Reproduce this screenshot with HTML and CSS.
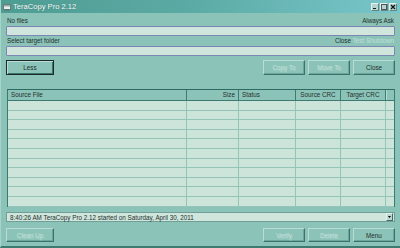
FILE: index.html
```html
<!DOCTYPE html>
<html>
<head>
<meta charset="utf-8">
<link rel="stylesheet" href="styles.css">
</head>
<body>
<div class="window">
  <div class="titlebar">
    <svg class="appicon" width="8" height="8" viewBox="0 0 8 8">
      <rect x="0.5" y="1.5" width="7" height="5" fill="#e8f0ee" stroke="#6a7f7c" stroke-width="1"/>
      <rect x="1" y="2" width="6" height="1.5" fill="#9aa9a7"/>
      <rect x="1.5" y="6.5" width="5" height="1" fill="#5c6d6a"/>
    </svg>
    <span class="title">TeraCopy Pro 2.12</span>
    <div class="winbtns">
      <span class="wbtn"><svg width="6" height="6" viewBox="0 0 6 6"><rect x="1" y="4" width="3" height="1" fill="#1a1a1a"/></svg></span>
      <span class="wbtn"><svg width="6" height="6" viewBox="0 0 6 6"><rect x="0.5" y="0.5" width="5" height="5" fill="none" stroke="#555" stroke-width="1"/></svg></span>
      <span class="wbtn"><svg width="6" height="6" viewBox="0 0 6 6"><path d="M1 1L5 5M5 1L1 5" stroke="#111" stroke-width="1.2"/></svg></span>
    </div>
  </div>
  <div class="content">
    <div class="labelrow first"><span>No files</span><span>Always Ask</span></div>
    <div class="field"></div>
    <div class="labelrow"><span>Select target folder</span><span class="opts">Close <span class="dis">Test</span> <span class="dis">Shutdown</span></span></div>
    <div class="field"></div>
    <div class="btnrow top">
      <button class="btn default">Less</button>
      <div class="btngroup">
        <button class="btn disabled">Copy To</button>
        <button class="btn disabled">Move To</button>
        <button class="btn">Close</button>
      </div>
    </div>
    <div class="list">
      <div class="lrow head">
        <div class="c c1">Source File</div>
        <div class="c c2 r">Size</div>
        <div class="c c3">Status</div>
        <div class="c c4 ctr">Source CRC</div>
        <div class="c c5 ctr">Target CRC</div>
        <div class="c c6"></div>
      </div>
      <div class="lrow"><div class="c c1"></div><div class="c c2"></div><div class="c c3"></div><div class="c c4"></div><div class="c c5"></div><div class="c c6"></div></div>
      <div class="lrow"><div class="c c1"></div><div class="c c2"></div><div class="c c3"></div><div class="c c4"></div><div class="c c5"></div><div class="c c6"></div></div>
      <div class="lrow"><div class="c c1"></div><div class="c c2"></div><div class="c c3"></div><div class="c c4"></div><div class="c c5"></div><div class="c c6"></div></div>
      <div class="lrow"><div class="c c1"></div><div class="c c2"></div><div class="c c3"></div><div class="c c4"></div><div class="c c5"></div><div class="c c6"></div></div>
      <div class="lrow"><div class="c c1"></div><div class="c c2"></div><div class="c c3"></div><div class="c c4"></div><div class="c c5"></div><div class="c c6"></div></div>
      <div class="lrow"><div class="c c1"></div><div class="c c2"></div><div class="c c3"></div><div class="c c4"></div><div class="c c5"></div><div class="c c6"></div></div>
      <div class="lrow"><div class="c c1"></div><div class="c c2"></div><div class="c c3"></div><div class="c c4"></div><div class="c c5"></div><div class="c c6"></div></div>
      <div class="lrow"><div class="c c1"></div><div class="c c2"></div><div class="c c3"></div><div class="c c4"></div><div class="c c5"></div><div class="c c6"></div></div>
      <div class="lrow"><div class="c c1"></div><div class="c c2"></div><div class="c c3"></div><div class="c c4"></div><div class="c c5"></div><div class="c c6"></div></div>
      <div class="lrow"><div class="c c1"></div><div class="c c2"></div><div class="c c3"></div><div class="c c4"></div><div class="c c5"></div><div class="c c6"></div></div>
      <div class="lrow"><div class="c c1"></div><div class="c c2"></div><div class="c c3"></div><div class="c c4"></div><div class="c c5"></div><div class="c c6"></div></div>
    </div>
    <div class="combo">
      <span class="log">8:40:26 AM TeraCopy Pro 2.12 started on Saturday, April 30, 2011</span>
      <span class="drop"><svg width="3" height="2" viewBox="0 0 3 2"><path d="M0 0H3L1.5 2Z" fill="#000"/></svg></span>
    </div>
    <div class="btnrow bottom">
      <button class="btn disabled wide">Clean Up</button>
      <div class="btngroup">
        <button class="btn disabled">Verify</button>
        <button class="btn disabled">Delete</button>
        <button class="btn">Menu</button>
      </div>
    </div>
  </div>
</div>
</body>
</html>
```
FILE: styles.css
```css
* { box-sizing: border-box; }
html, body { margin: 0; padding: 0; }
body {
  width: 400px; height: 248px; overflow: hidden;
  font-family: "Liberation Sans", Arial, sans-serif;
  font-size: 6.3px;
  color: #1f302d;
  background: #8cc3b8;
}
.window {
  width: 400px; height: 248px;
  display: flex; flex-direction: column;
  background: #8cc3b8;
  border-left: 1px solid #a6d3ca;
  border-bottom: 2px solid #3d7a70;
}
.titlebar {
  height: 13px; flex: none;
  display: flex; align-items: center;
  padding-left: 2px;
  background: linear-gradient(90deg, #4e9d93 0%, #5ba9a3 45%, #79c6cb 100%);
}
.appicon { flex: none; margin-right: 2px; }
.title {
  color: #fff; font-size: 7.6px;
  text-shadow: 0 0 1px #2f6f67;
}
.winbtns { margin-left: auto; margin-right: 3px; display: flex; gap: 1px; }
.wbtn {
  width: 8px; height: 8px;
  display: flex; align-items: center; justify-content: center;
  background: #b6d3ce;
  border: 1px solid; border-color: #e4f1ee #5d8a84 #5d8a84 #e4f1ee;
}
.content { flex: 1; display: flex; flex-direction: column; padding: 0 5px 0 5px; }
.labelrow {
  height: 10px; display: flex; justify-content: space-between; align-items: flex-end;
  padding: 0 1px 1px 1px; line-height: 8px;
}
.labelrow.first { height: 13px; }
.dis { color: #c0e0d9; }
.field {
  height: 10px;
  background: #d0e6dd;
  border: 1px solid #7d86b2;
  border-radius: 1px;
}
.btnrow { display: flex; justify-content: space-between; }
.btnrow.top { margin-top: 4px; height: 15px; }
.btngroup { display: flex; gap: 3px; }
.btn {
  font: inherit; color: #1f302d;
  width: 42px; height: 100%;
  padding: 0; margin: 0;
  background: #8cc3b8;
  border: 1px solid; border-color: #b9dcd5 #3b7269 #3b7269 #b9dcd5;
  box-shadow: inset -1px -1px 0 #6ea59b;
}
.btn.default { width: 48px; border-color: #1a2b28; box-shadow: inset 1px 1px 0 #b9dcd5, inset -1px -1px 0 #3b7269; }
.btn.disabled { color: #c2e1da; text-shadow: 1px 1px 0 #a0ccc3; }
.btn.wide { width: 48px; }
.list {
  margin-top: 14px; margin-left: 1px;
  height: 118px;
  border: 1px solid #3b7a70;
  border-top-color: #2f6a61;
  background: #cde4da;
  display: flex; flex-direction: column;
}
.lrow { display: flex; height: 9.6px; flex: none; border-bottom: 1px solid #94c3b8; }
.lrow.head { height: 11px; background: #8cc3b8; border-bottom: 1px solid #3d7a70; line-height: 10px; }
.c { border-right: 1px solid #94c3b8; padding: 0 3px; white-space: nowrap; overflow: hidden; }
.head .c { border-right: 1px solid #3d7a70; }
.c1 { width: 179px; }
.c2 { width: 52px; }
.c3 { width: 57px; }
.c4 { width: 45px; }
.c5 { width: 45px; }
.c6 { flex: 1; border-right: none; }
.head .c6 { border-right: none; border-left: 1px solid #b9dcd5; }
.r { text-align: right; }
.ctr { text-align: center; }
.combo {
  margin-top: 5px; height: 10px;
  display: flex; align-items: center;
  background: #d0e6dd;
  border: 1px solid #6f9f96;
  padding-left: 3px;
}
.log { flex: 1; white-space: nowrap; }
.drop {
  width: 7px; height: 8px; margin-right: 1px;
  display: flex; align-items: center; justify-content: center;
  background: #b9d6d1;
  border: 1px solid; border-color: #e4f1ee #3f6d67 #3f6d67 #e4f1ee;
}
.btnrow.bottom { margin-top: 6px; height: 14px; }
```
